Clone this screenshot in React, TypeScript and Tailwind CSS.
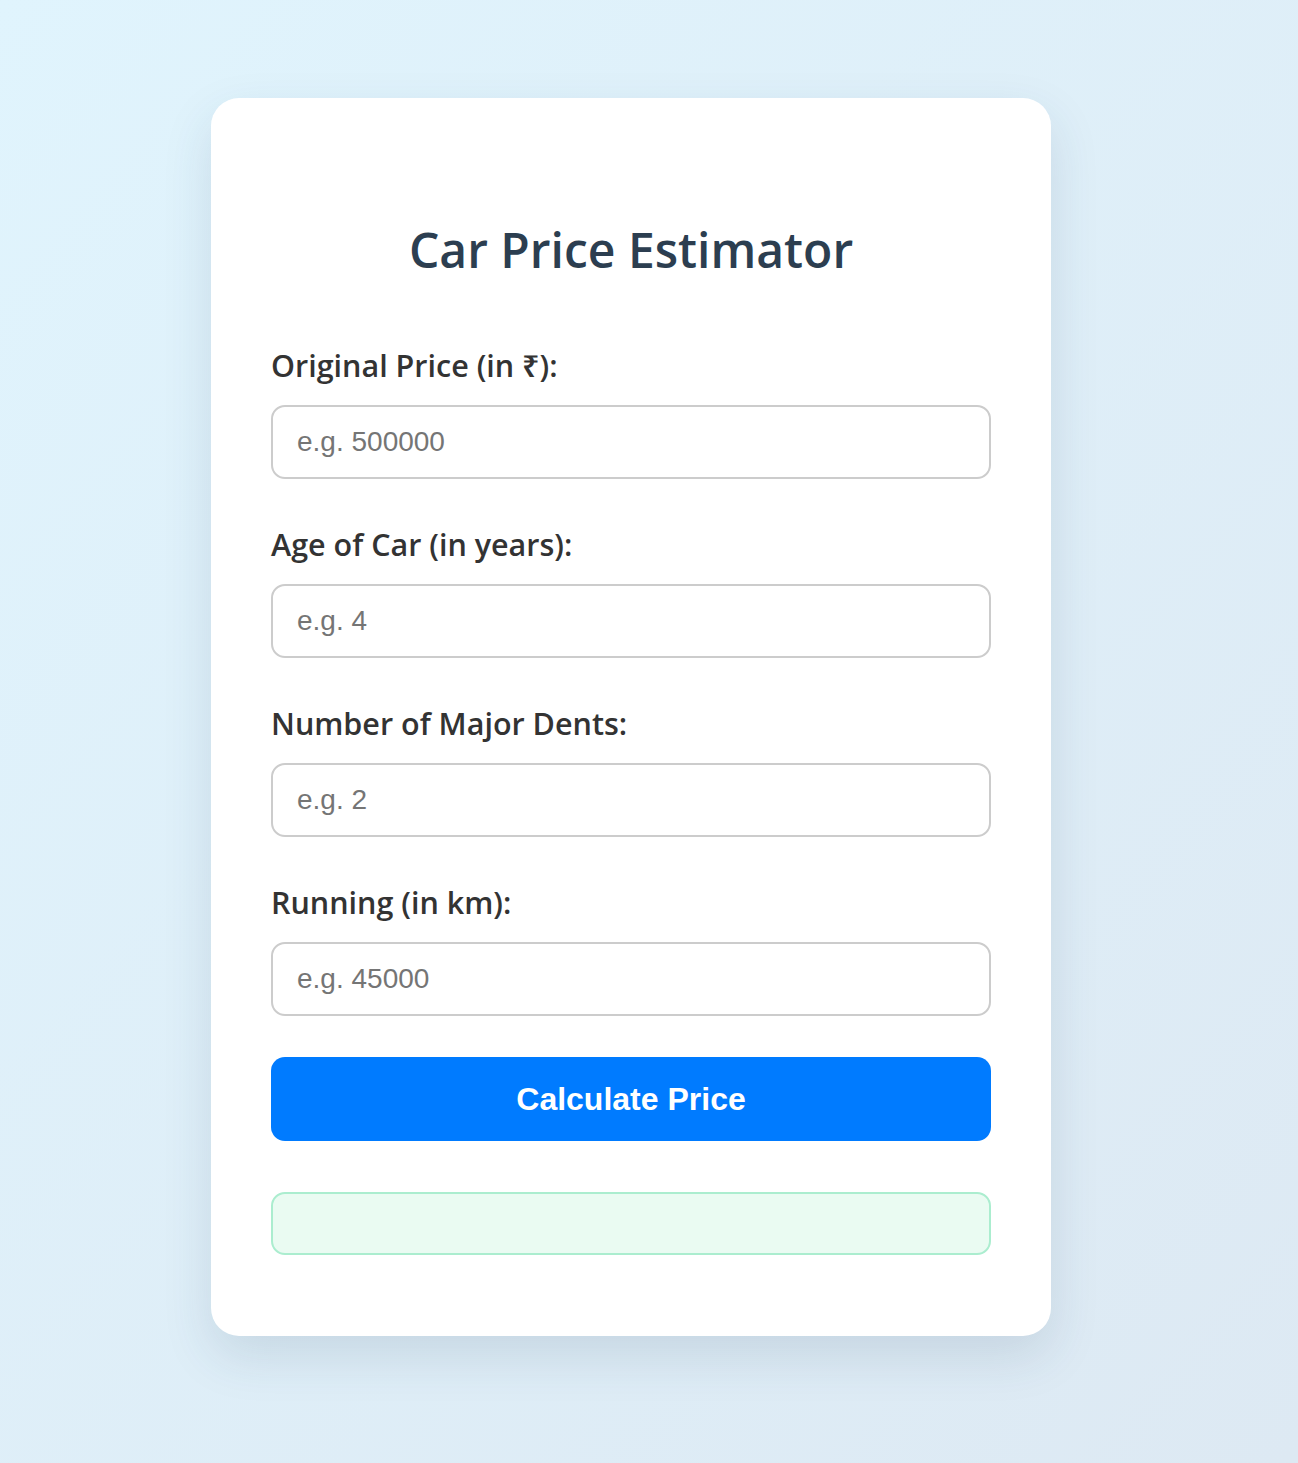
import React from 'react';

const fields = [
  { label: 'Original Price (in ₹):', placeholder: 'e.g. 500000' },
  { label: 'Age of Car (in years):', placeholder: 'e.g. 4' },
  { label: 'Number of Major Dents:', placeholder: 'e.g. 2' },
  { label: 'Running (in km):', placeholder: 'e.g. 45000' },
];

const App = () => {
  return (
    <div className="min-h-[1463px] w-full bg-gradient-to-br from-[#e0f4fd] to-[#dde9f3] flex justify-center pt-[98px] pr-[36px]">
      <div className="w-[840px] h-[1238px] bg-white rounded-[28px] shadow-[0_20px_50px_rgba(40,70,100,0.13)] px-[60px] pt-[124px] pb-[81px] flex flex-col">
        <h1 className="text-center text-[48px] leading-[55px] font-semibold text-[#2c3e50] font-['Open_Sans',sans-serif]">
          Car Price Estimator
        </h1>
        <div className="mt-[70px] flex flex-col">
          {fields.map((f, i) => (
            <div key={f.label} className={i > 0 ? 'mt-[47px] flex flex-col' : 'flex flex-col'}>
              <label className="text-[30.5px] leading-[36px] font-semibold text-[#333] font-['Open_Sans','Noto_Sans',sans-serif]">
                {f.label}
              </label>
              <input
                type="text"
                placeholder={f.placeholder}
                className="mt-[22px] h-[74px] w-full border-2 border-[#ccc] rounded-[14px] pl-[24px] text-[28px] font-['Liberation_Sans',Arial,sans-serif] placeholder:text-[#757575] outline-none"
              />
            </div>
          ))}
        </div>
        <button className="mt-[41px] h-[84px] w-full bg-[#007bff] rounded-[14px] text-white font-bold text-[32px] font-['Liberation_Sans',Arial,sans-serif]">
          Calculate Price
        </button>
        <div className="mt-[51px] h-[63px] w-full bg-[#eafbf2] border-2 border-[#abedcf] rounded-[14px]"></div>
      </div>
    </div>
  );
};

export default App;
